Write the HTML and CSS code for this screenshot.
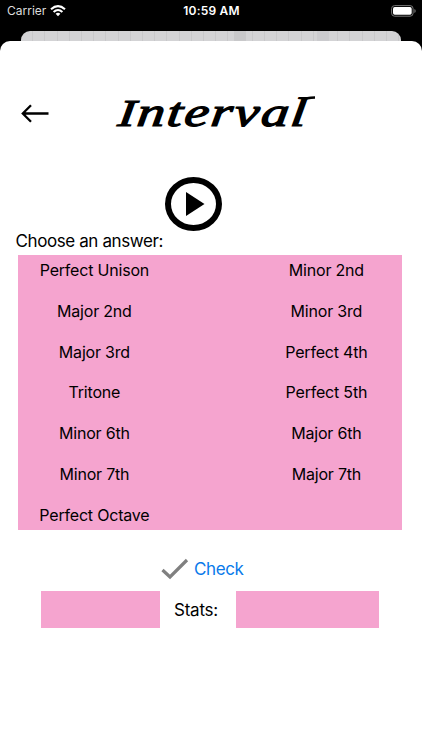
FILE: index.html
```html
<!DOCTYPE html>
<html lang="en">
<head>
<meta charset="utf-8">
<title>Interval</title>
<link rel="stylesheet" href="styles.css">
</head>
<body>
<header class="status">
  <div class="carrier"><span>Carrier</span>
    <svg class="wifi" viewBox="0 0 16 12" width="16" height="12"><g fill="none" stroke="#fff" stroke-width="2.1"><path d="M1 4.3Q8-2 15 4.3"/><path d="M3.6 7Q8 3 12.4 7"/></g><path fill="#fff" d="M5.6 8.800Q8 6.900 10.400 8.800L8 11.300z"/></svg>
  </div>
  <time class="time">10:59 AM</time>
  <svg class="battery" viewBox="0 0 25 12" width="25" height="12"><rect x=".6" y=".6" width="21.5" height="10.6" rx="3" fill="none" stroke="#777"/><rect x="2" y="2" width="18.7" height="7.8" rx="1.7" fill="#fff"/><path d="M23.4 4v4q1.300-.6 1.300-2t-1.300-2" fill="#777"/></svg>
</header>
<div class="backdrop"><i class="key key-a"></i><i class="key key-b"></i></div>
<main class="sheet">
  <div class="heading">
    <svg class="back" viewBox="0 0 30 22" width="30" height="22"><path d="M28.500 11.500H3M11 3.300L2.800 11.500l8.200 8.200" fill="none" stroke="#000" stroke-width="2.300"/></svg>
    <svg class="title" viewBox="0 0 206 48" width="206" height="48"><text transform="translate(4 36.500) skewX(-7)" x="0" y="0" textLength="190" lengthAdjust="spacingAndGlyphs"><tspan class="initial">I</tspan>nterval</text><path d="M190 11.500Q193 8.500 202 8.500" fill="none" stroke="#000" stroke-width="2.500"/></svg>
  </div>
  <svg class="play" viewBox="0 0 58 56" width="58" height="56"><ellipse cx="29.500" cy="28" rx="25.500" ry="24" fill="none" stroke="#000" stroke-width="6"/><path d="M22 16v24l18.500-12z"/></svg>
  <p class="prompt">Choose an answer:</p>
  <section class="answers">
    <div class="column"><span>Perfect Unison</span><span>Major 2nd</span><span>Major 3rd</span><span>Tritone</span><span>Minor 6th</span><span>Minor 7th</span><span>Perfect Octave</span></div>
    <div class="column"><span>Minor 2nd</span><span>Minor 3rd</span><span>Perfect 4th</span><span>Perfect 5th</span><span>Major 6th</span><span>Major 7th</span></div>
  </section>
  <div class="check">
    <svg viewBox="0 0 28 22" width="28" height="22"><path d="M1.500 12L9 19 26 2" fill="none" stroke="#808080" stroke-width="3.200"/></svg>
    <span>Check</span>
  </div>
  <div class="stats"><div class="box correct"></div><span>Stats:</span><div class="box total"></div></div>
</main>
</body>
</html>
```
FILE: styles.css
```css
* { box-sizing: border-box; }
body { margin: 0; width: 422px; height: 750px; overflow: hidden; background: #000; color: #000; font-family: Inter, "Liberation Sans", sans-serif; }
svg { display: block; flex: none; }
.status { height: 31px; padding: 0 6px 10px 7px; display: grid; grid-template-columns: 1fr auto 1fr; align-items: center; color: #fff; font-size: 12px; }
.carrier { display: flex; align-items: center; gap: 4px; color: #ddd; }
.time { font-weight: 600; letter-spacing: .2px; }
.battery { justify-self: end; }
.backdrop { height: 10px; margin: 0 21px; border-radius: 9px 9px 0 0; display: flex; padding-left: 213px; gap: 71px; background: repeating-linear-gradient(90deg, #d3d3d5 0 11.200px, #c8c8ca 11.200px 12.200px); }
.key { width: 12px; height: 10px; background: #c8c8ca; }
.key-b { background: #cbcbce; }
.sheet { height: 709px; border-radius: 10px 10px 0 0; background: #fff; padding-top: 46px; }
.heading { display: flex; align-items: center; height: 51px; padding-left: 20px; gap: 63px; }
.title { overflow: visible; }
.title text { font: italic 400 41px "Liberation Serif", serif; letter-spacing: 1.5px; stroke: #000; stroke-width: 1.2px; }
.title .initial { font-size: 38px; }
.play { margin: 38px 0 0 164px; }
.prompt { margin: -2px 0 0 15.500px; height: 25px; line-height: 23px; font-size: 17px; letter-spacing: -.4px; }
.answers { width: 384px; height: 275px; margin-left: 18.400px; display: flex; justify-content: space-between; background: #f5a4cf; }
.column { width: 152px; display: grid; grid-auto-rows: 40.750px; text-align: center; font-size: 16px; line-height: 30.500px; letter-spacing: -.2px; }
.check { display: flex; align-items: center; gap: 5px; height: 24px; margin: 27px 0 0 161px; color: #0a7aea; font-size: 17px; letter-spacing: -.4px; }
.stats { display: flex; align-items: center; height: 37px; margin: 10px 0 0 41px; font-size: 17px; letter-spacing: -.25px; }
.stats span { width: 76px; padding-right: 4px; text-align: center; }
.box { height: 37px; background: #f5a4cf; }
.correct { width: 119px; }
.total { width: 143px; }
```
